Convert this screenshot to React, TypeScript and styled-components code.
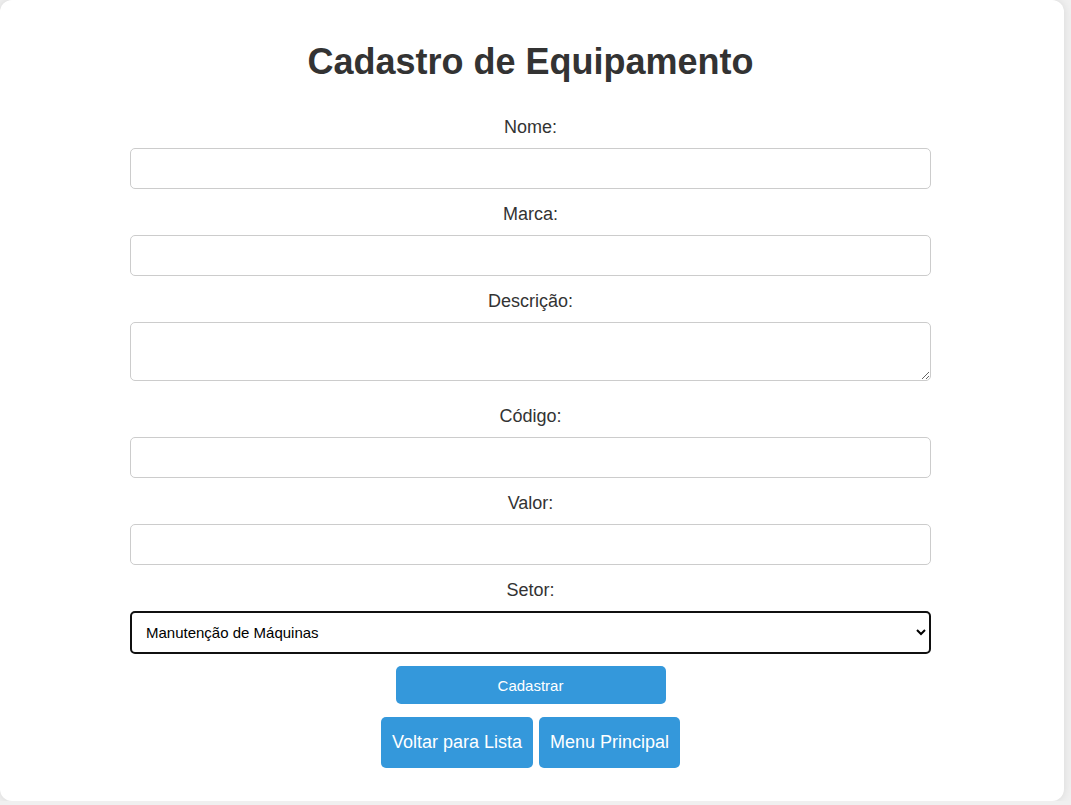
import React from "react";
import styled, { createGlobalStyle } from "styled-components";

const GlobalStyle = createGlobalStyle`
  html, body {
    margin: 0;
    padding: 0;
    background: #f0f0f0;
    font-family: "Liberation Sans", Arial, sans-serif;
  }
  * { box-sizing: border-box; }
`;

const Card = styled.div`
  width: 1064px;
  height: 801px;
  background: #ffffff;
  border-radius: 12px;
  box-shadow: 0 0 10px rgba(0, 0, 0, 0.1);
  padding: 41px 0 0 130px;
`;

const Form = styled.form`
  width: 801px;
  display: flex;
  flex-direction: column;
  align-items: stretch;
`;

const Title = styled.h1`
  margin: 0 0 36px;
  font-size: 36px;
  line-height: 41px;
  font-weight: bold;
  color: #333333;
  text-align: center;
`;

const Label = styled.label`
  display: block;
  font-size: 18px;
  line-height: 19px;
  color: #333333;
  text-align: center;
  margin-bottom: 11px;
`;

const Input = styled.input`
  display: block;
  width: 100%;
  height: 41px;
  border: 1px solid #cccccc;
  border-radius: 5px;
  padding: 10px;
  font-size: 16px;
  font-family: "Liberation Sans", Arial, sans-serif;
  margin: 0 0 16px;
  outline: none;
`;

const TextArea = styled.textarea`
  display: block;
  width: 100%;
  height: 59px;
  border: 1px solid #cccccc;
  border-radius: 5px;
  padding: 10px;
  font-size: 16px;
  font-family: "Liberation Sans", Arial, sans-serif;
  margin: 0 0 26px;
  outline: none;
`;

const Select = styled.select`
  display: block;
  width: 100%;
  height: 43px;
  border: 2px solid #101010;
  border-radius: 5px;
  padding: 0 10px;
  font-size: 15px;
  font-family: "Liberation Sans", Arial, sans-serif;
  color: #000000;
  background: #ffffff;
  margin: 0 0 12px;
  outline: none;
`;

const PrimaryButton = styled.button`
  align-self: center;
  width: 270px;
  height: 38px;
  border: none;
  border-radius: 5px;
  background: #3498db;
  color: #ffffff;
  font-size: 15px;
  font-family: "Liberation Sans", Arial, sans-serif;
  cursor: pointer;
  margin: 0 0 13px;
`;

const ButtonRow = styled.div`
  display: flex;
  justify-content: center;
  gap: 6px;
`;

const LinkButton = styled.button`
  height: 51px;
  padding: 0 11px;
  border: none;
  border-radius: 5px;
  background: #3498db;
  color: #ffffff;
  font-size: 18px;
  font-family: "Liberation Sans", Arial, sans-serif;
  cursor: pointer;
`;

export default function App() {
  return (
    <>
      <GlobalStyle />
      <Card>
        <Form onSubmit={(e) => e.preventDefault()}>
          <Title>Cadastro de Equipamento</Title>
          <Label htmlFor="nome">Nome:</Label>
          <Input id="nome" type="text" />
          <Label htmlFor="marca">Marca:</Label>
          <Input id="marca" type="text" />
          <Label htmlFor="descricao">Descrição:</Label>
          <TextArea id="descricao" />
          <Label htmlFor="codigo">Código:</Label>
          <Input id="codigo" type="text" />
          <Label htmlFor="valor">Valor:</Label>
          <Input id="valor" type="text" />
          <Label htmlFor="setor">Setor:</Label>
          <Select id="setor" defaultValue="manutencao">
            <option value="manutencao">Manutenção de Máquinas</option>
          </Select>
          <PrimaryButton type="submit">Cadastrar</PrimaryButton>
          <ButtonRow>
            <LinkButton type="button">Voltar para Lista</LinkButton>
            <LinkButton type="button">Menu Principal</LinkButton>
          </ButtonRow>
        </Form>
      </Card>
    </>
  );
}
